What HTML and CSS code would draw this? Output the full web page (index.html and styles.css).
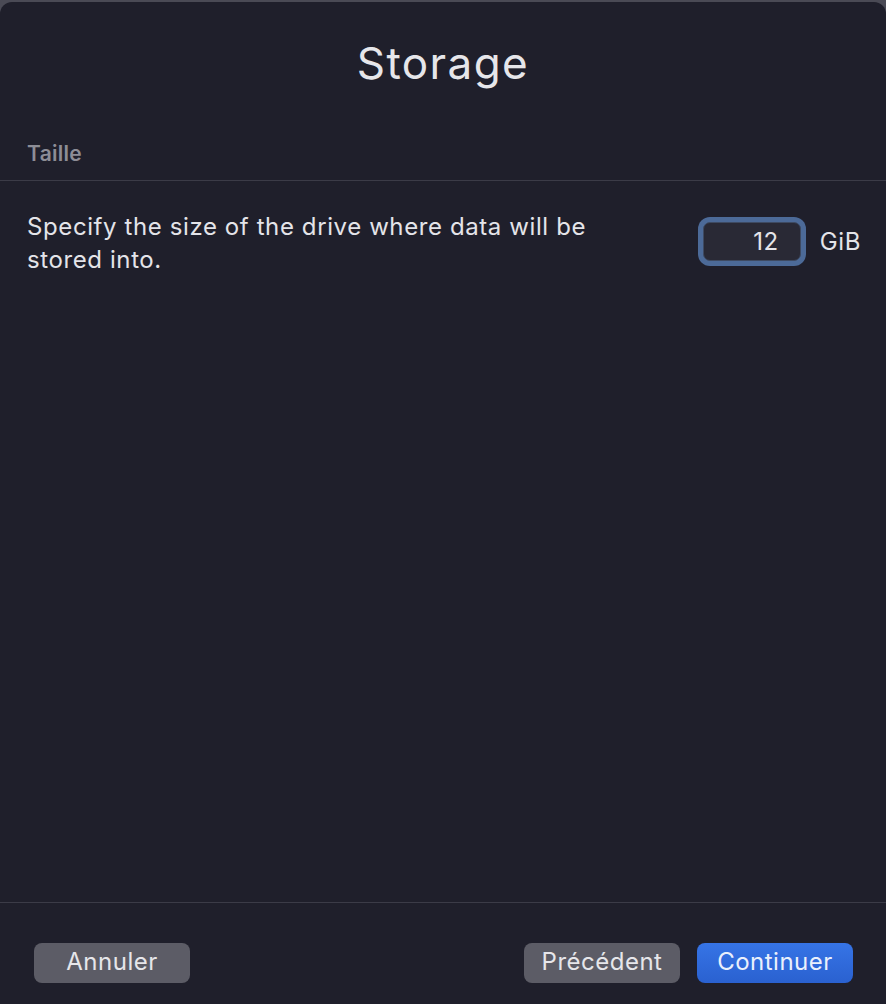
FILE: index.html
```html
<!DOCTYPE html>
<html>
  <head>
    <title>Storage</title>
    <link rel="stylesheet" href="styles.css">
  </head>
  <body>
    <div class="window">
      <h1 class="title">Storage</h1>

      <div class="section-label">Taille</div>
      <div class="divider"></div>

      <div class="content">
        <div class="row">
          <p class="description">Specify the size of the drive where data will be stored into.</p>
          <div class="size-field">
            <input class="size-input" type="text" value="12" />
            <span class="unit">GiB</span>
          </div>
        </div>
      </div>

      <div class="divider"></div>
      <div class="footer">
        <button class="btn">Annuler</button>
        <div class="footer-right">
          <button class="btn">Précédent</button>
          <button class="btn btn-primary">Continuer</button>
        </div>
      </div>
    </div>
  </body>
</html>
```

FILE: styles.css
```css
html,
body {
  margin: 0;
  height: 100%;
}

body {
  background-color: #4a4a55;
  font-family: Inter, "Noto Sans", sans-serif;
  color: #e4e4e9;
  overflow: hidden;
}

.window {
  margin-top: 2px;
  height: 1002px;
  background-color: #1f1f2b;
  border-radius: 12px 12px 0 0;
  display: flex;
  flex-direction: column;
}

.title {
  margin: 0;
  padding-top: 35px;
  font-size: 44px;
  line-height: 52px;
  font-weight: 400;
  letter-spacing: 1.4px;
  text-align: center;
  color: #e6e6ea;
}

.section-label {
  margin-top: 52px;
  padding: 0 27px 13px;
  font-size: 21px;
  line-height: 26px;
  font-weight: 600;
  letter-spacing: 0.3px;
  color: #8d8d96;
}

.divider {
  height: 1px;
  background-color: #3b3b47;
}

.content {
  flex: 1;
  padding: 29px 25px 0 27px;
}

.row {
  display: flex;
  justify-content: space-between;
  align-items: flex-start;
}

.description {
  margin: 0;
  max-width: 600px;
  font-size: 24px;
  line-height: 33px;
  letter-spacing: 0.6px;
  color: #e4e4e9;
}

.size-field {
  margin-top: 12px;
  display: flex;
  align-items: center;
  gap: 19px;
}

.size-input {
  box-sizing: border-box;
  width: 98px;
  height: 39px;
  padding: 0 21px 0 8px;
  border: 1px solid #3e4a62;
  border-radius: 7px;
  box-shadow: 0 0 0 5px #4c6a98;
  background-color: #292935;
  font-family: inherit;
  font-size: 24px;
  letter-spacing: 0.6px;
  color: #e4e4e9;
  text-align: right;
  outline: none;
}

.unit {
  font-size: 24px;
  line-height: 33px;
  letter-spacing: 0.6px;
}

.footer {
  height: 101px;
  padding: 40px 33px 0 34px;
  box-sizing: border-box;
  display: flex;
  justify-content: space-between;
  align-items: flex-start;
}

.footer-right {
  display: flex;
  gap: 17px;
}

.btn {
  box-sizing: border-box;
  width: 156px;
  height: 40px;
  padding: 0 0 3px;
  border: none;
  border-radius: 8px;
  background-color: #5c5c66;
  font-family: inherit;
  font-size: 24px;
  letter-spacing: 0.5px;
  color: #e6e6ea;
}

.btn-primary {
  background: linear-gradient(#3674e6, #2a61d0);
  color: #eaf0fc;
}
```
